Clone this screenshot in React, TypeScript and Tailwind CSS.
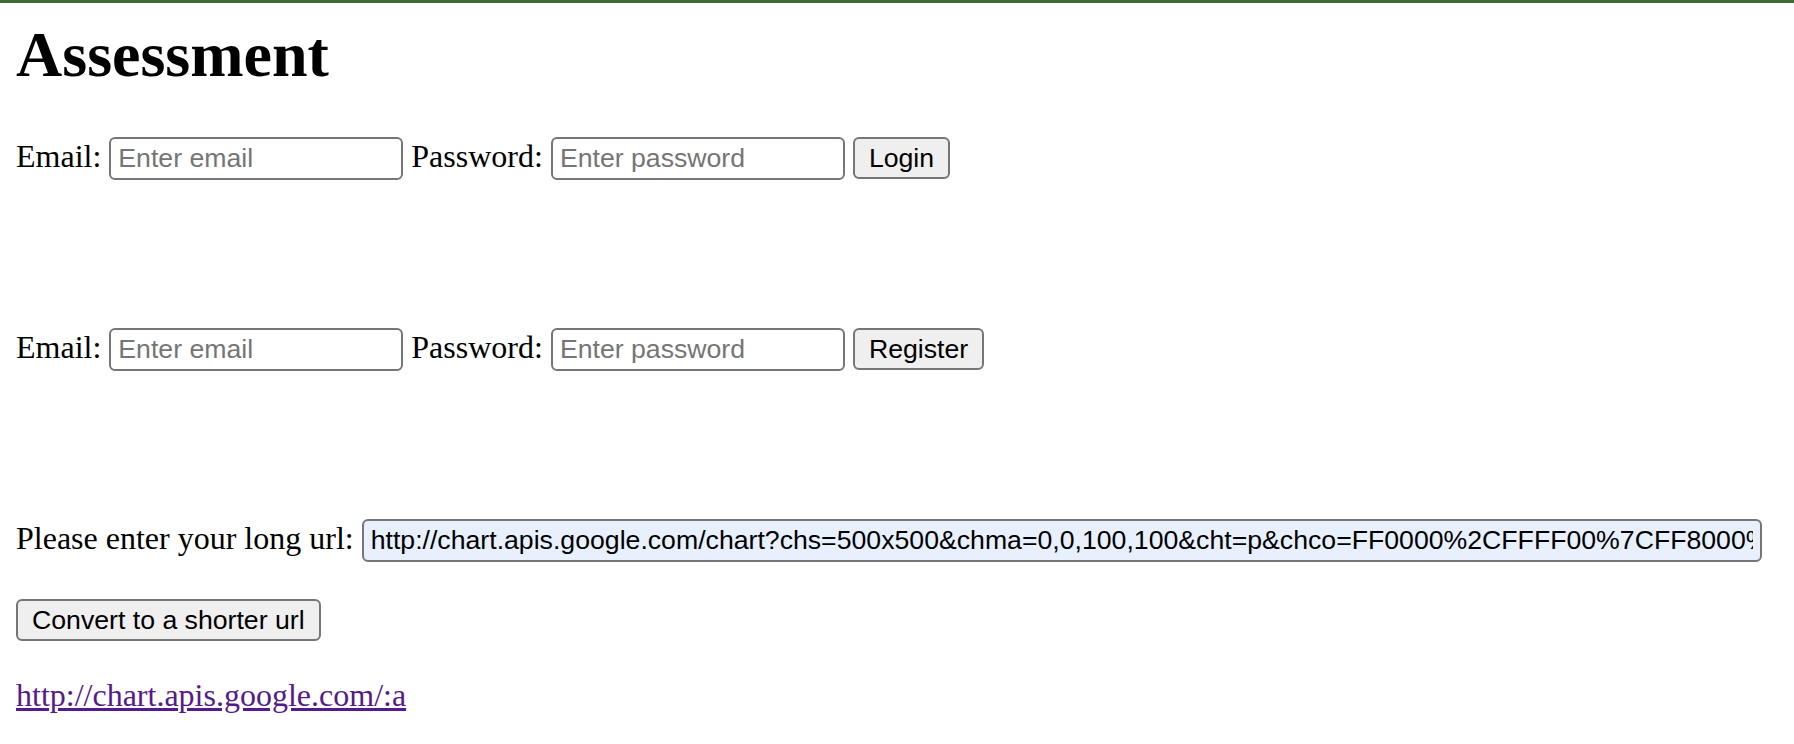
const LONG_URL =
  "http://chart.apis.google.com/chart?chs=500x500&chma=0,0,100,100&cht=p&chco=FF0000%2CFFFF00%7CFF8000%2C00FF00%7C00FF80&chd=t%3A-1%7C-1";

function Field({ placeholder, type = "text" }: { placeholder: string; type?: string }) {
  return (
    <input
      type={type}
      placeholder={placeholder}
      className="h-[43px] w-[294px] shrink-0 rounded-[6px] border-2 border-[#767676] bg-white px-[7px] font-['Liberation_Sans',Arial,sans-serif] text-[26.67px] text-black outline-none placeholder:text-[#757575]"
    />
  );
}

function Btn({ children }: { children: React.ReactNode }) {
  return (
    <button className="h-[42px] shrink-0 rounded-[6px] border-2 border-[#767676] bg-[#efefef] px-[14px] font-['Liberation_Sans',Arial,sans-serif] text-[26.67px] leading-none text-black">
      {children}
    </button>
  );
}

function AuthRow({ action, className }: { action: string; className: string }) {
  return (
    <div className={`flex h-[43px] items-baseline gap-2 ${className}`}>
      <span className="leading-[36px]">Email:</span>
      <Field placeholder="Enter email" type="email" />
      <span className="leading-[36px]">Password:</span>
      <Field placeholder="Enter password" type="password" />
      <Btn>{action}</Btn>
    </div>
  );
}

export default function App() {
  return (
    <div className="min-h-[744px] w-[1794px] bg-white font-['Liberation_Serif','Times_New_Roman',serif] text-[32px] text-black">
      <div className="h-[3px] bg-[#3e6a38]" />
      <div className="px-4">
        <h1 className="mt-4 text-[64px] font-bold leading-[72px]">Assessment</h1>

        <AuthRow action="Login" className="mt-[46px]" />
        <AuthRow action="Register" className="mt-[148px]" />

        <div className="mt-[148px] flex h-[43px] items-baseline gap-2">
          <span className="shrink-0 leading-[36px]">Please enter your long url:</span>
          <input
            type="text"
            readOnly
            value={LONG_URL}
            className="h-[43px] w-[1400px] rounded-[6px] border-2 border-[#767676] bg-[#e8f0fe] px-[7px] font-['Liberation_Sans',Arial,sans-serif] text-[26.67px] text-black outline-none"
          />
        </div>

        <div className="mt-[37px] flex">
          <Btn>Convert to a shorter url</Btn>
        </div>

        <div className="mt-9 leading-[36px]">
          <a href="#" className="text-[#551a8b] underline">
            http://chart.apis.google.com/:a
          </a>
        </div>
      </div>
    </div>
  );
}
